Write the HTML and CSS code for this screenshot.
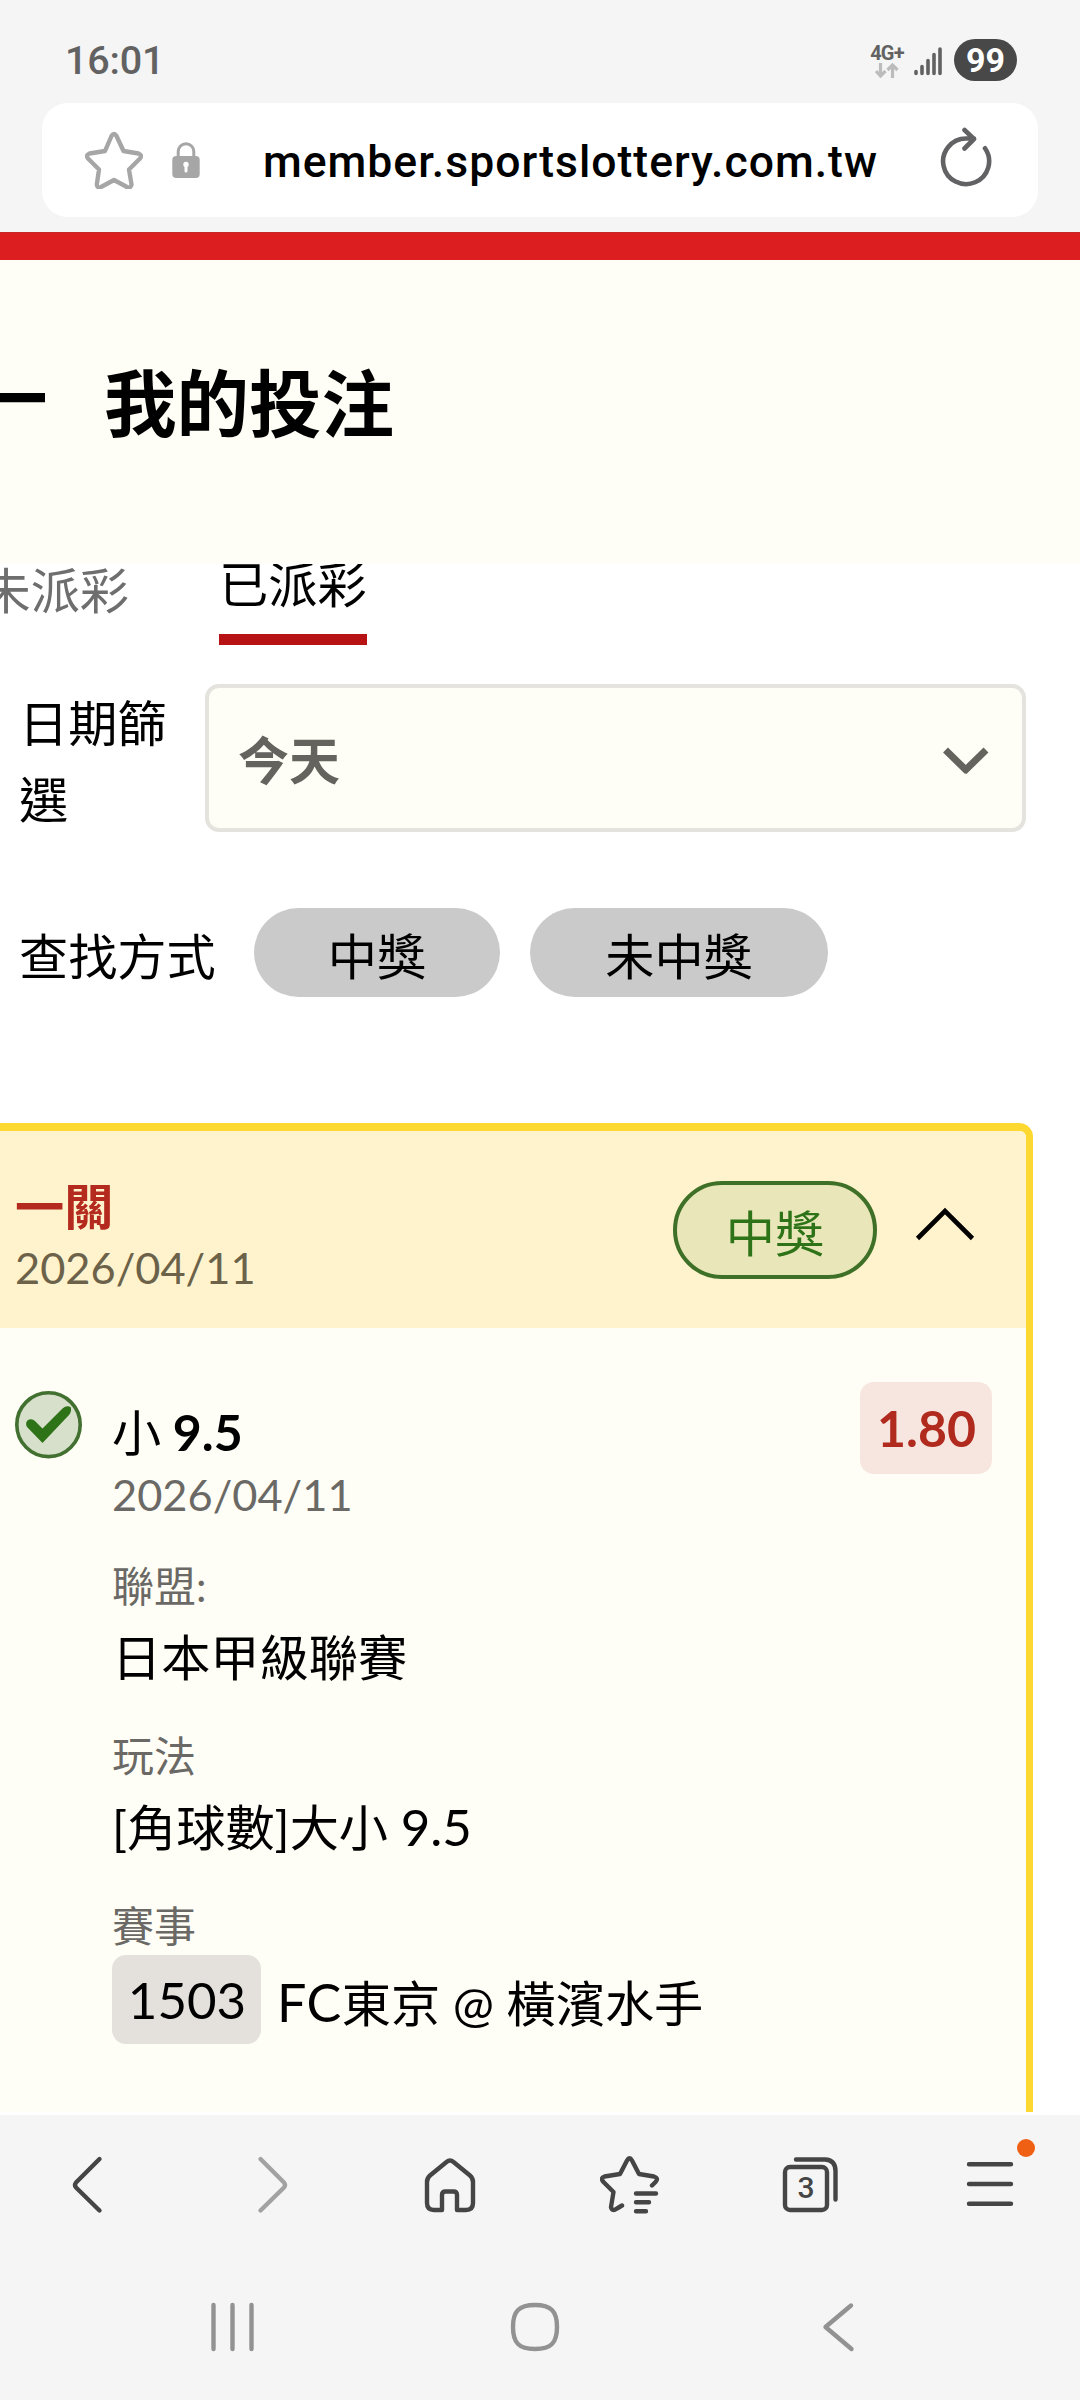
FILE: index.html
```html
<!DOCTYPE html>
<html lang="zh-Hant">
<head>
<meta charset="utf-8">
<title>我的投注</title>
<link rel="stylesheet" href="styles.css">
</head>
<body>
<div class="screen">
  <div class="status">
    <span class="time">16:01</span>
    <div class="indicators">
      <div class="network">
        <span class="network-type">4G+</span>
        <svg width="24" height="15" viewBox="0 0 24 15" fill="none" stroke="#bcbcbc" stroke-width="3.2"><path d="M5.500 0V13M1 8L5.500 13L10.500 8M17.500 15V1.500M12.500 7L17.500 2L22.500 7"/></svg>
      </div>
      <svg class="signal" width="28" height="30" viewBox="0 0 28 30" stroke="#626262" stroke-width="3.600" stroke-linecap="round"><path d="M2 25.500V27.500M8 20.500V27.500M14 14.500V27.500M20 8.500V27.500M26 3V27.500"/></svg>
      <span class="battery">99</span>
    </div>
  </div>

  <div class="address">
    <svg class="fav" width="58" height="58" viewBox="0 0 58 58" fill="none" stroke="#a6a6a6" stroke-width="4.400" stroke-linejoin="round"><path d="M26.500 5Q29 1 31.500 5L38.500 20L53.500 22.500Q57.500 24 55 27.500L44 38.500L46.500 53.500Q46 57.500 42 56L29 49L16 56Q12 57.500 11.800 53.500L14 38.500L3 27.500Q0.500 24 4.500 22.500L20 20Z"/></svg>
    <svg class="lock" width="28" height="38" viewBox="0 0 28 38"><path d="M6.200 16V10.500A7.800 7.800 0 0 1 21.800 10.500V16" fill="none" stroke="#a6a6a6" stroke-width="3"/><rect x="0.300" y="15" width="27.400" height="22" rx="4" fill="#a6a6a6"/><circle cx="14" cy="23.500" r="2.700" fill="#fff"/><path d="M14 24V30" stroke="#fff" stroke-width="3" stroke-linecap="round"/></svg>
    <span class="url">member.sportslottery.com.tw</span>
    <svg class="reload" width="54" height="62" viewBox="0 0 54 62" fill="none" stroke="#626264" stroke-width="4.600" stroke-linecap="round" stroke-linejoin="round"><path d="M46 23.300A23 22.800 0 1 1 27 13.500H35M25.500 5L35 14L25.500 23.500"/></svg>
  </div>

  <div class="brand-bar"></div>

  <header class="page-head">
    <svg class="back" width="45" height="10" viewBox="0 0 45 10"><path d="M0 0H45V9.300H0Z"/></svg>
    <h1>我的投注</h1>
  </header>

  <nav class="tabs">
    <span class="tab">未派彩</span>
    <span class="tab active">已派彩</span>
  </nav>

  <div class="filter">
    <span class="label">日期篩選</span>
    <div class="select">
      <span>今天</span>
      <svg width="48" height="28" viewBox="0 0 48 28" fill="none" stroke="#65635e" stroke-width="7"><path d="M3.500 3L25.500 24.500M22 24.500L44 3"/></svg>
    </div>
  </div>

  <div class="modes">
    <span class="label">查找方式</span>
    <span class="chip">中獎</span>
    <span class="chip wide">未中獎</span>
  </div>

  <section class="card">
    <div class="card-head">
      <div class="card-title">
        <strong>一關</strong>
        <span class="date">2026/04/11</span>
      </div>
      <span class="won">中獎</span>
      <svg width="60" height="36" viewBox="0 0 60 36" fill="none" stroke="#000" stroke-width="4.600"><path d="M2.500 33.500L30 6L57.500 33.500"/></svg>
    </div>
    <div class="card-body">
      <svg class="check" width="68" height="68" viewBox="0 0 68 68"><ellipse cx="33.500" cy="33.700" rx="31.700" ry="31.900" fill="#d7e0cb" stroke="#417030" stroke-width="3.600"/><path d="M12 36Q9.500 31 14 28.600Q17.500 27.500 20 30L27.500 37.500L47.500 17.500Q52 13.500 56 16.500Q56.500 21 54 24L27.500 52Z" fill="#2e7318"/></svg>
      <div class="detail">
        <div class="pick">小 <b>9.5</b></div>
        <div class="date">2026/04/11</div>
        <div class="key">聯盟:</div>
        <div class="value">日本甲級聯賽</div>
        <div class="key">玩法</div>
        <div class="value">[角球數]大小 <span class="line">9.5</span></div>
        <div class="key">賽事</div>
        <div class="match"><span class="number">1503</span><span><span class="club">FC</span>東京 @ 橫濱水手</span></div>
      </div>
      <span class="odds">1.80</span>
    </div>
  </section>

  <div class="toolbar">
    <svg width="60" height="60" viewBox="0 0 60 60" class="prev"><path d="M39.500 5L16 28.500Q14 31 16 33.500L39.500 56.500"/></svg>
    <svg width="60" height="60" viewBox="0 0 60 60" class="next"><path d="M20.500 5L44 28.500Q46 31 44 33.500L20.500 56.500"/></svg>
    <svg width="60" height="60" viewBox="0 0 60 60"><path d="M22 56H14Q7 56 7 49V28Q7 24 10 21.500L26.500 8Q30 5 33.500 8L50 21.500Q53 24 53 28V49Q53 56 46 56H37V41Q37 37.500 33.500 37.500H25.500Q22 37.500 22 41Z"/></svg>
    <svg width="60" height="60" viewBox="0 0 60 60"><path d="M22 51.500L17 54.500Q12 58 11 53L13.500 38L3.500 28Q0 24 4.500 22.500L20 20L27 6.500Q29.500 2 32 6.500L39 20L54 22.500Q59 24 55.500 28L52 31.500M36 39.500H56M36 48.300H49M36 57.200H46" /></svg>
    <div class="pages">
      <svg width="60" height="60" viewBox="0 0 60 60"><rect x="5" y="13" width="42" height="43" rx="5"/><path d="M16 5.500H45Q55.500 6 55.500 17V45.500"/></svg>
      <span class="count">3</span>
    </div>
    <div class="menu">
      <svg width="60" height="60" viewBox="0 0 60 60"><path d="M9 10.300H51M9 30H51M9 49.700H51"/></svg>
      <i class="dot"></i>
    </div>
  </div>

  <div class="system-nav">
    <svg width="60" height="60" viewBox="0 0 60 60"><path d="M11.500 9V53M30.500 9V53M49.500 9V53"/></svg>
    <svg width="60" height="60" viewBox="0 0 60 60"><path d="M30 9C46 9 52 15 52 31S46 53 30 53S8 47 8 31S14 9 30 9Z"/></svg>
    <svg width="60" height="60" viewBox="0 0 60 60"><path d="M43 9.500L17.500 31L43.500 53"/></svg>
  </div>
</div>
</body>
</html>
```
FILE: styles.css
```css
* { box-sizing: border-box; }

body {
  margin: 0;
  background: #fff;
}

svg { display: block; flex: none; }

.screen {
  width: 1080px;
  height: 2400px;
  overflow: hidden;
  display: flex;
  flex-direction: column;
  background: #fff;
  color: #000;
  font: 49.2px/60px Lato, "Noto Sans CJK TC", sans-serif;
  white-space: nowrap;
}

.screen > * { flex: none; }

.status {
  height: 103px;
  padding: 0 63px 0 65px;
  display: flex;
  justify-content: space-between;
  background: #f5f5f5;
  font-family: Roboto, sans-serif;
}

.time {
  margin-top: 31px;
  font-size: 39.500px;
  font-weight: 500;
  letter-spacing: -0.200px;
  color: #626262;
}

.indicators { display: flex; }

.network {
  width: 36px;
  margin: 44px 9px 0 0;
  display: flex;
  flex-direction: column;
  align-items: center;
}

.network-type {
  height: 19px;
  font-size: 20px;
  line-height: 19px;
  font-weight: 700;
  letter-spacing: -0.800px;
  color: #626262;
}

.signal { margin-top: 46px; }

.battery {
  width: 63px;
  height: 42px;
  margin: 39px 0 0 12px;
  border-radius: 21px;
  background: #484848;
  color: #fff;
  font-size: 34px;
  line-height: 43px;
  font-weight: 700;
  text-align: center;
}

.address {
  height: 114px;
  margin: 0 42px;
  padding: 0 43px 0 43px;
  display: flex;
  align-items: flex-start;
  border-radius: 26px;
  background: #fff;
  box-shadow: 0 0 0 60px #f5f5f5;
  clip-path: inset(0 -42px -15px -42px);
}

.fav { margin-top: 28px; }
.lock { margin: 38px 0 0 29px; }

.url {
  margin: 29px 0 0 63px;
  width: 616px;
  font: 500 44.500px/60px Roboto, sans-serif;
  letter-spacing: 1px;
}

.reload { margin: 22px 0 0 60px; }

.brand-bar {
  height: 28px;
  margin-top: 15px;
  border-top: 1px solid #c42826;
  background: #dc1e20;
}

.page-head {
  height: 304px;
  padding-bottom: 18px;
  display: flex;
  align-items: center;
  background: #fffef6;
}

.back { margin-bottom: 11px; }

h1 {
  margin: 0 0 0 59px;
  font-size: 72.500px;
  line-height: 90px;
  font-weight: 700;
}

.tabs {
  height: 81px;
  overflow: hidden;
  display: flex;
  align-items: flex-start;
  gap: 90px;
}

.tab {
  margin-left: -18.500px;
  line-height: 52px;
  color: #6e6e6e;
}

.tab.active {
  height: 81px;
  margin-left: 0;
  border-bottom: 11px solid #b71314;
  line-height: 40px;
  color: #000;
}

.filter {
  height: 148px;
  margin-top: 39px;
  padding-left: 19px;
  display: flex;
}

.filter .label {
  width: 186px;
  padding: 1px 37px 0 0;
  line-height: 76px;
  white-space: normal;
}

.select {
  width: 821px;
  height: 148px;
  padding: 5px 32px 0 29px;
  display: flex;
  align-items: center;
  justify-content: space-between;
  border: 4px solid #e5e3dd;
  border-radius: 14px;
  background: #fffef6;
  color: #65635e;
  font-size: 51px;
  font-weight: 700;
}

.modes {
  height: 89px;
  margin-top: 76px;
  padding-left: 19px;
  display: flex;
  line-height: 96px;
}

.modes .label { width: 235px; }

.chip {
  width: 246px;
  height: 89px;
  border-radius: 45px;
  background: #cacaca;
  text-align: center;
}

.chip.wide { width: 298px; margin-left: 30px; }

.card {
  width: 1053px;
  height: 989px;
  margin: 126px 0 0 -20px;
  border: 8px solid #fcd830;
  border-right-width: 7px;
  border-bottom: 0;
  border-radius: 14px 14px 0 0;
  background: #fffef6;
}

.card-head {
  height: 197px;
  padding: 0 51px 0 27px;
  display: flex;
  align-items: flex-start;
  border-radius: 0 6px 0 0;
  background: #fff3cd;
}

.card-title {
  padding-top: 45px;
  margin-right: auto;
  display: flex;
  flex-direction: column;
}

.card-title strong { color: #b42a1f; }

.date {
  font-size: 43.400px;
  line-height: 62px;
  color: #6b6965;
}

.card-title .date { color: #6b6249; }

.won {
  width: 204px;
  height: 98px;
  margin-top: 50px;
  border: 4px solid #3f7028;
  border-radius: 49px;
  background: #e9e7b9;
  color: #2e7318;
  line-height: 95px;
  text-align: center;
}

.card-head svg { margin: 74px 0 0 38px; }

.card-body {
  padding: 0 34px 0 27px;
  display: flex;
  align-items: flex-start;
}

.check { margin-top: 63px; }

.detail {
  margin-right: auto;
  padding: 74px 0 0 29px;
}

.pick {
  word-spacing: -1px;
  margin-bottom: 1px;
}

.pick b, .odds { font-size: 50px; font-weight: 700; }

.key {
  margin-top: 44px;
  font-size: 42px;
  line-height: 50px;
  color: #6b6965;
}

.date + .key { margin-top: 36px; }

.value { margin-top: 16px; }

.line { font-size: 51px; }

.match {
  margin-top: 4px;
  display: flex;
  gap: 16px;
  line-height: 94px;
}

.number {
  width: 149px;
  height: 89px;
  padding-left: 1px;
  border-radius: 14px;
  background: #e4e1dc;
  font-size: 51px;
  line-height: 89px;
  text-align: center;
}

.club {
  font-size: 52px;
  letter-spacing: 0.500px;
}

.odds {
  width: 132px;
  height: 92px;
  margin-top: 54px;
  padding-left: 1px;
  border-radius: 14px;
  background: #f7e6df;
  color: #b02a1e;
  line-height: 92px;
  text-align: center;
}

.toolbar {
  height: 139px;
  margin-top: 3px;
  padding-bottom: 2px;
  display: grid;
  grid-template-columns: repeat(6, 180px);
  justify-items: center;
  align-items: center;
  background: #f5f5f5;
}

.toolbar svg, .system-nav svg {
  fill: none;
  stroke: #454545;
  stroke-width: 4.400px;
  stroke-linecap: round;
  stroke-linejoin: round;
}

.toolbar .next { stroke: #a2a2a2; }

.pages, .menu { position: relative; }

.count {
  position: absolute;
  left: 5px;
  top: 14px;
  width: 42px;
  font: 500 30px/40px Roboto, sans-serif;
  color: #454545;
  text-align: center;
}

.dot {
  position: absolute;
  left: 57px;
  top: -15px;
  width: 18px;
  height: 18px;
  border-radius: 50%;
  background: #f06014;
}

.system-nav {
  height: 146px;
  padding: 42px 91px 0 81px;
  display: grid;
  grid-template-columns: repeat(3, 1fr);
  justify-items: center;
  align-items: start;
  background: #f5f5f5;
}

.system-nav svg { stroke: #929292; }
```
